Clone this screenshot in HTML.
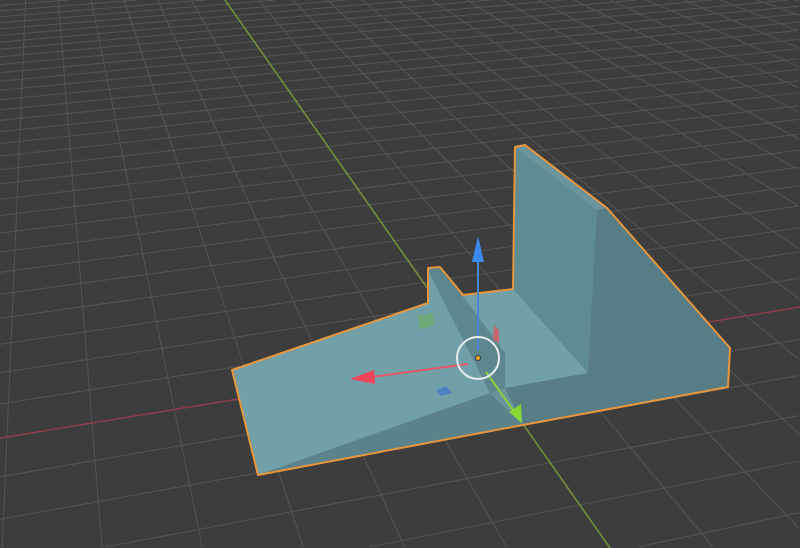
<!DOCTYPE html>
<html><head><meta charset="utf-8"><style>
html,body{margin:0;padding:0;background:#3d3d3d;overflow:hidden;width:800px;height:548px}
svg{display:block;position:absolute;left:0;top:0}
</style></head><body>
<svg id="s" width="800" height="548" viewBox="0 0 800 548" overflow="hidden" xmlns="http://www.w3.org/2000/svg">
<rect width="800" height="548" fill="#3d3d3d"/>
<g id="grid" stroke="#545454" stroke-width="1" fill="none"></g>
<line x1="225" y1="0" x2="610" y2="548" stroke="#6f9038" stroke-width="1.6"/>
<line x1="0" y1="438" x2="800" y2="307" stroke="#903a4a" stroke-width="1.4"/>
<polygon points="232,370 428,303 428,268 440,267 463,295 513,289 515,147 525,145 607,208 730,348 728,387 523,425 258,475" fill="#6a959d"/>
<polygon points="232,370 428,303 428,270 490,393 258,475" fill="#72a0a8"/>
<polygon points="463,295 513,289 588,373 505,388 505,353" fill="#72a0a8"/>
<polygon points="515,147 597,210 588,373 513,289" fill="#5f8b93"/>
<polygon points="428,270 440,267 505,353 505,388 490,393" fill="#5d878f"/>
<polygon points="597,210 607,208 730,348 728,387 523,425 505,388 588,373" fill="#577e86"/>
<polygon points="258,475 490,393 523,425" fill="#5b838b"/>
<polygon points="232,370 428,303 428,268 440,267 463,295 513,289 515,147 525,145 607,208 730,348 728,387 523,425 258,475" fill="none" stroke="#e8963c" stroke-width="2" stroke-linejoin="round"/>
<line x1="478" y1="262" x2="478" y2="350" stroke="#4a84d8" stroke-width="2"/>
<polygon points="478,236 472,262 484,262" fill="#3d8bf0"/>
<line x1="468" y1="364" x2="372" y2="377" stroke="#e8566a" stroke-width="2"/>
<polygon points="350,379 374,370 375,384" fill="#f04558"/>
<line x1="486" y1="372" x2="513" y2="410" stroke="#8ad23a" stroke-width="2"/>
<polygon points="522,423 509,412 521,404" fill="#86d634"/>
<polygon points="418,316 433,313 434,326 420,329" fill="#6cad6a" opacity="0.8"/>
<polygon points="436,390 446,386 452,393 441,396" fill="#4a7fc4" opacity="0.9"/>
<polygon points="494,325 499,330 499,343 493,340" fill="#d06070" opacity="0.9"/>
<circle cx="478" cy="358" r="21" fill="none" stroke="#e8eef0" stroke-width="2"/>
<circle cx="478" cy="358" r="2.5" fill="#f0a030" stroke="#222" stroke-width="0.8"/>
</svg>
<script>
(function(){
var O=[478,360],V2=[5077,-395],V1=[37,-267];
var a=72/4650,b=36/767;
function P(u,v){var w=1+u*a+v*b;var x=(O[0]+u*a*V2[0]+v*b*V1[0])/w;var y=(O[1]+u*a*V2[1]+v*b*V1[1])/w;return [x,y];}
var g=document.getElementById('grid'),s='';
function clip(p,q){
 var x0=p[0],y0=p[1],dx=q[0]-x0,dy=q[1]-y0,t0=0,t1=1;
 var P_=[-dx,dx,-dy,dy],Q=[x0-0,799-x0,y0-0,547-y0];
 for(var i=0;i<4;i++){
  if(P_[i]==0){if(Q[i]<0)return null;}
  else{var r=Q[i]/P_[i];if(P_[i]<0){if(r>t1)return null;if(r>t0)t0=r;}else{if(r<t0)return null;if(r<t1)t1=r;}}
 }
 return [[x0+t0*dx,y0+t0*dy],[x0+t1*dx,y0+t1*dy]];
}
function seg(p,q){var c=clip(p,q);if(!c)return;s+='<line x1="'+c[0][0].toFixed(1)+'" y1="'+c[0][1].toFixed(1)+'" x2="'+c[1][0].toFixed(1)+'" y2="'+c[1][1].toFixed(1)+'"/>';}
for(var k=-80;k<=200;k++){
 var vmin=(0.03-1-k*a)/b, vmax=3000;
 if(1+k*a+vmax*b>0) seg(P(k,vmin),P(k,vmax));
 var umin=(0.03-1-k*b)/a, umax=20000;
 if(1+k*b+umax*a>0) seg(P(umin,k),P(umax,k));
}
g.innerHTML=s;
})();
</script>
</body></html>
